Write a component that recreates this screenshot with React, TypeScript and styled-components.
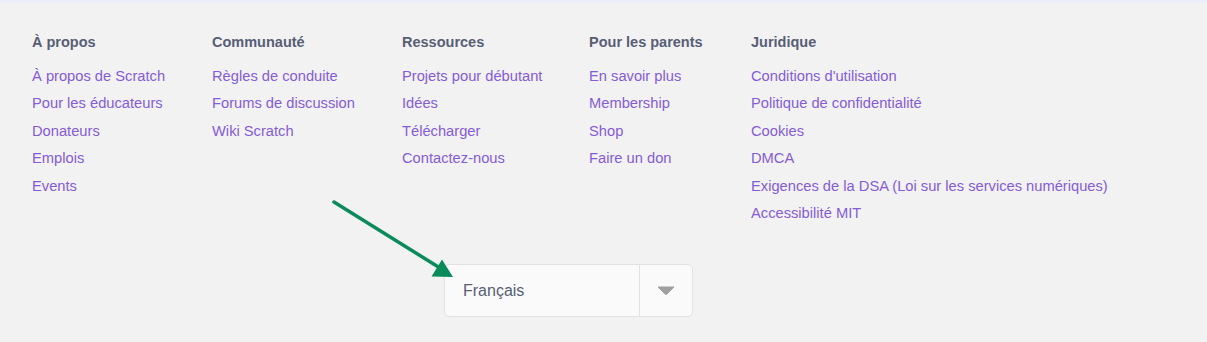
import React from "react";
import styled, { createGlobalStyle } from "styled-components";

const GlobalStyle = createGlobalStyle`
  html, body {
    margin: 0;
    padding: 0;
    background: #f2f2f2;
  }
  body {
    font-family: "Liberation Sans", Arial, sans-serif;
  }
`;

const Footer = styled.footer`
  position: relative;
  width: 1207px;
  height: 342px;
  box-sizing: border-box;
  background: #f2f2f2;
  border-top: 3px solid #e9eef8;
  padding: 29px 0 0 32px;
`;

const Columns = styled.div`
  display: flex;
`;

const Column = styled.dl<{ $width?: number }>`
  margin: 0;
  padding: 0;
  width: ${(p) => (p.$width ? `${p.$width}px` : "auto")};
  flex-shrink: 0;
`;

const Heading = styled.dt`
  font-size: 14.5px;
  font-weight: bold;
  color: #575e75;
  line-height: 20px;
  margin-bottom: 11px;
  white-space: nowrap;
`;

const Item = styled.dd`
  margin: 0;
  font-size: 14.7px;
  line-height: 27.4px;
  white-space: nowrap;
`;

const Link = styled.a`
  color: #855cd6;
  text-decoration: none;
`;

const LanguageRow = styled.div`
  display: flex;
  padding-left: 412px;
  margin-top: 37px;
`;

const Select = styled.div`
  display: flex;
  width: 249px;
  height: 53px;
  box-sizing: border-box;
  border: 1px solid #e2e2e2;
  border-radius: 5px;
  background: #fafafa;
`;

const SelectValue = styled.div`
  flex: 1;
  display: flex;
  align-items: center;
  padding-left: 18px;
  font-size: 16px;
  color: #575e75;
  border-right: 1px solid #e2e2e2;
`;

const SelectToggle = styled.div`
  width: 52px;
  display: flex;
  align-items: center;
  justify-content: center;
`;

const Arrow = styled.svg`
  position: absolute;
  left: 0;
  top: 0;
  pointer-events: none;
`;

const columns: { title: string; width?: number; links: string[] }[] = [
  {
    title: "À propos",
    width: 180,
    links: ["À propos de Scratch", "Pour les éducateurs", "Donateurs", "Emplois", "Events"],
  },
  {
    title: "Communauté",
    width: 190,
    links: ["Règles de conduite", "Forums de discussion", "Wiki Scratch"],
  },
  {
    title: "Ressources",
    width: 187,
    links: ["Projets pour débutant", "Idées", "Télécharger", "Contactez-nous"],
  },
  {
    title: "Pour les parents",
    width: 162,
    links: ["En savoir plus", "Membership", "Shop", "Faire un don"],
  },
  {
    title: "Juridique",
    links: [
      "Conditions d'utilisation",
      "Politique de confidentialité",
      "Cookies",
      "DMCA",
      "Exigences de la DSA (Loi sur les services numériques)",
      "Accessibilité MIT",
    ],
  },
];

export default function App() {
  return (
    <>
      <GlobalStyle />
      <Footer>
        <Columns>
          {columns.map((col) => (
            <Column key={col.title} $width={col.width}>
              <Heading>{col.title}</Heading>
              {col.links.map((l) => (
                <Item key={l}>
                  <Link href="#">{l}</Link>
                </Item>
              ))}
            </Column>
          ))}
        </Columns>
        <LanguageRow>
          <Select>
            <SelectValue>Français</SelectValue>
            <SelectToggle>
              <svg width="18" height="9" viewBox="0 0 18 9">
                <path d="M1 1 L17 1 L10 8 Q9 9 8 8 Z" fill="#a0a0a0" stroke="#a0a0a0" strokeWidth="1" strokeLinejoin="round" />
              </svg>
            </SelectToggle>
          </Select>
        </LanguageRow>
        <Arrow width="1207" height="342" viewBox="0 0 1207 342">
          <line x1="334" y1="199" x2="440" y2="265" stroke="#0b8a5a" strokeWidth="3.5" strokeLinecap="round" />
          <polygon points="453,274 431.5,273.5 442,256.5" fill="#0b8a5a" />
        </Arrow>
      </Footer>
    </>
  );
}
